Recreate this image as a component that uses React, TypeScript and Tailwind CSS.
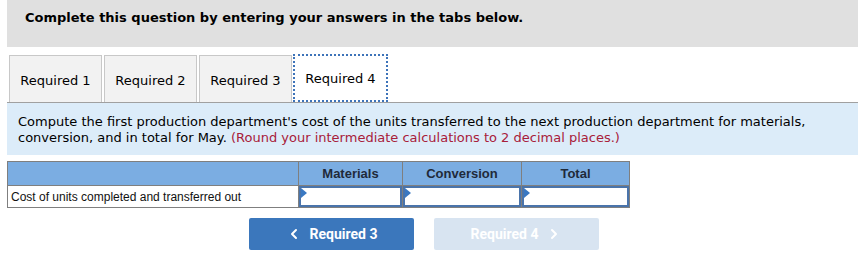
import {ChevronLeft, ChevronRight} from "lucide-react"

const tabs = ["Required 1", "Required 2", "Required 3", "Required 4"]
const columns = ["Materials", "Conversion", "Total"]
const widths = ["w-[104px]", "w-[119px]", "w-[108px]"]

function Corner() {
	return <span className="absolute left-0 top-0 w-0 h-0 border-t-[5px] border-b-[5px] border-l-[6px] border-t-transparent border-b-transparent border-l-[#3a78c2]" />
}

export default function App() {
	return (
		<div className="w-[862px] h-[274px] bg-white pl-[7px] pr-[4px] font-['DejaVu_Sans',Verdana,sans-serif] text-[13px] text-black">
			<div className="h-[47px] bg-[#e0e0e0] pl-[18px] pt-[8px] font-bold">
				Complete this question by entering your answers in the tabs below.
			</div>

			<div className="mt-[8px] flex gap-[2px] pl-[2px] border-b border-[#a0a0a0]">
				{tabs.map((t, i) =>
					i === 3 ? (
						<div
							key={t}
							className="w-[95px] h-[48px] -mt-[1px] -ml-[1px] bg-white border-2 border-dotted border-[#3d73b9] flex items-center justify-center pt-[2px]">
							{t}
						</div>
					) : (
						<div
							key={t}
							className="w-[93px] h-[47px] bg-[#f2f2f2] border border-b-0 border-[#c8c8c8] flex items-center justify-center pt-[3px]">
							{t}
						</div>
					)
				)}
			</div>

			<div className="h-[52px] bg-[#dcecf9] pl-[11px] pt-[11px] leading-[16px]">
				Compute the first production department's cost of the units transferred to the next production department for materials,
				<br />
				conversion, and in total for May. <span className="text-[#a8203a]">(Round your intermediate calculations to 2 decimal places.)</span>
			</div>

			<table className="mt-[6px] border-collapse font-['Liberation_Sans',Arial,sans-serif]">
				<thead>
					<tr className="h-[24px] bg-[#7bade2]">
						<th className="w-[291px] border border-[#7f7f7f]" />
						{columns.map((c, i) => (
							<th key={c} className={`${widths[i]} border border-[#7f7f7f] text-[13px] font-bold text-[#1f2a3a] text-center`}>
								{c}
							</th>
						))}
					</tr>
				</thead>
				<tbody>
					<tr className="h-[22px]">
						<td className="border border-[#7f7f7f] pl-[3px] text-[12px] text-[#111]">Cost of units completed and transferred out</td>
						{columns.map((c) => (
							<td key={c} className="border border-[#7f7f7f] p-0">
								<div className="relative h-[21px] border-2 border-[#4a74ab] bg-white">
									<Corner />
								</div>
							</td>
						))}
					</tr>
				</tbody>
			</table>

			<div className="mt-[10px] flex gap-[20px] pl-[242px] font-['Roboto',sans-serif]">
				<button className="w-[165px] h-[32px] rounded-[2px] bg-[#3b77bc] text-white text-[14px] font-bold flex items-center justify-center gap-[8px]">
					<ChevronLeft size={16} strokeWidth={3} />
					Required 3
				</button>
				<button className="w-[165px] h-[32px] rounded-[2px] bg-[#d8e4f1] text-white text-[14px] font-bold flex items-center justify-center gap-[8px]">
					Required 4
					<ChevronRight size={16} strokeWidth={3} />
				</button>
			</div>
		</div>
	)
}
